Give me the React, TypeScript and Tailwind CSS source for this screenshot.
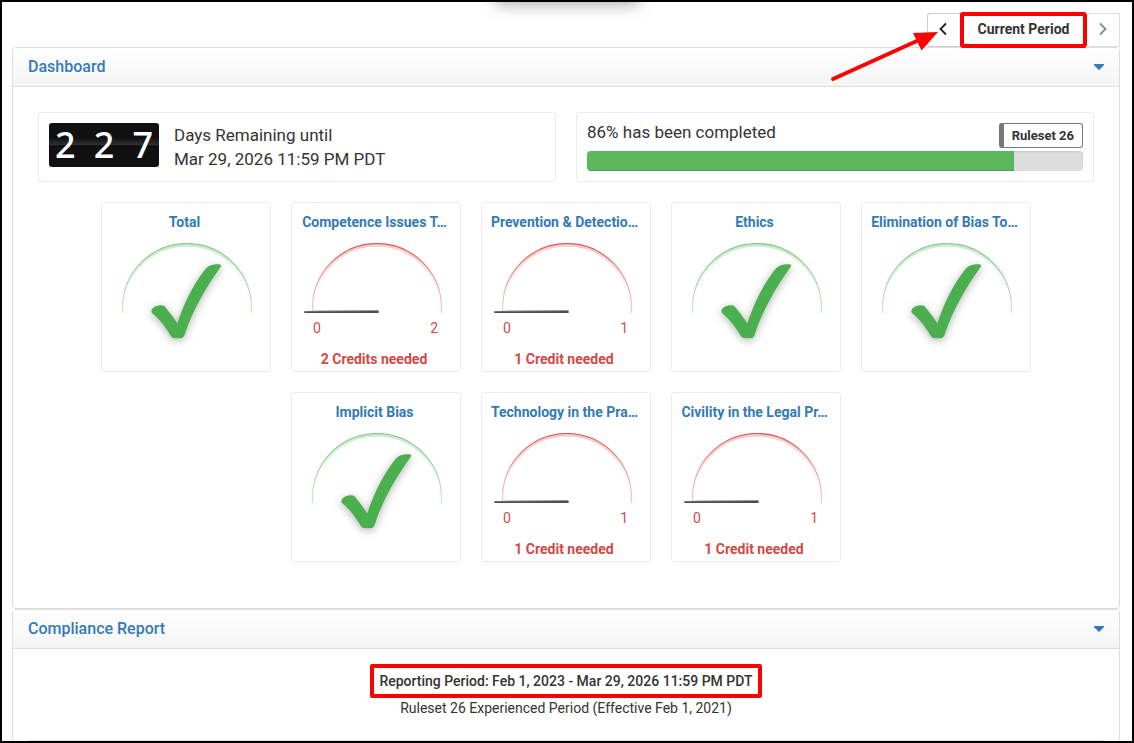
import React from "react";

type Tile = { title: string; needed?: number };

const tiles: Tile[] = [
  { title: "Total" },
  { title: "Competence Issues T…", needed: 2 },
  { title: "Prevention & Detectio…", needed: 1 },
  { title: "Ethics" },
  { title: "Elimination of Bias To…" },
  { title: "Implicit Bias" },
  { title: "Technology in the Pra…", needed: 1 },
  { title: "Civility in the Legal Pr…", needed: 1 },
];

function Gauge({ done }: { done: boolean }) {
  const id = done ? "arc-done" : "arc-open";
  const color = done ? "#4caf50" : "#d9453d";
  return (
    <svg viewBox="0 0 168 106" className="block h-[106px] w-full overflow-visible" aria-hidden="true">
      <defs>
        <linearGradient id={id} gradientUnits="userSpaceOnUse" x1="0" y1="10" x2="0" y2="80">
          <stop offset="0" stopColor={color} stopOpacity={done ? 0.65 : 0.95} />
          <stop offset="0.5" stopColor={color} stopOpacity="0.5" />
          <stop offset="1" stopColor={color} stopOpacity="0.28" />
        </linearGradient>
        <linearGradient id={id + "-glow"} gradientUnits="userSpaceOnUse" x1="0" y1="10" x2="0" y2="60">
          <stop offset="0" stopColor={color} stopOpacity="0.3" />
          <stop offset="1" stopColor={color} stopOpacity="0" />
        </linearGradient>
        <filter id="mark-shadow" x="-30%" y="-30%" width="160%" height="160%">
          <feDropShadow dx="0" dy="2" stdDeviation="4" floodColor="#000" floodOpacity="0.3" />
        </filter>
      </defs>
      <path d="M21.5 79V75A63.5 63 0 0 1 148.5 75V79" fill="none" stroke={`url(#${id}-glow)`} strokeWidth="3" />
      <path d="M20.5 80V75A64.5 64.5 0 0 1 149.5 75V80" fill="none" stroke={`url(#${id})`} strokeWidth="1.2" />
      {done ? (
        <path
          filter="url(#mark-shadow)"
          fill="#4caf50"
          d="M49.3 78.5C49.3 75 54 72.3 59.5 72.3C61.5 72.3 62.5 73 64 75C68 80 72 85.2 75.3 90.2C82 70 92 50 103.5 36C105.5 33.500 109 31.2 116 31.2C119 31.2 119.8 32 118.5 34.2C105 53 91 76 82.8 101.500C82 104.5 80.5 105.3 75.5 105.3C71.5 105.3 69.8 105 68.5 102.5C63.5 94.5 57.5 86 50.5 80.5C49.7 79.8 49.3 79.2 49.3 78.5Z"
        />
      ) : (
        <g>
          <path d="M12 78.3L28 77.6L86.5 77V80H12.5Z" fill="#909090" />
          <path d="M12.5 78.5L86.5 78V80L12.5 80Z" fill="#4f4d4d" />
        </g>
      )}
    </svg>
  );
}

function CreditTile({ title, needed }: Tile) {
  return (
    <article className="flex h-[170px] w-[170px] flex-col rounded-[3px] border border-[#ebebeb] pt-[9px]">
      <h3 className="pr-[3px] text-center text-sm/5 font-bold whitespace-nowrap text-[#337ab7]">{title}</h3>
      <div className="relative pt-px">
        <Gauge done={!needed} />
        {needed && (
          <div className="absolute inset-x-0 top-[86px] flex justify-between pr-[22px] pl-[21px] text-sm/5 text-[#d14a45]">
            <span>0</span>
            <span>{needed}</span>
          </div>
        )}
      </div>
      {needed && (
        <p className="mt-2.5 pr-1 text-center text-sm/5 font-bold text-[#d14a45]">
          {needed} {needed > 1 ? "Credits" : "Credit"} needed
        </p>
      )}
    </article>
  );
}

function PanelHeader({ title }: { title: string }) {
  return (
    <header className="flex h-[39px] items-center justify-between border-b border-[#ddd] bg-linear-to-b from-white to-[#f4f4f4] pr-3.5 pl-[15px]">
      <h2 className="text-base/5 font-medium text-[#337ab7]">{title}</h2>
      <button type="button" aria-label={`Toggle ${title}`} className="flex h-5 w-3 items-center justify-center">
        <svg viewBox="0 0 12 8" className="h-2 w-3" aria-hidden="true">
          <path d="M1.3 1H10.7Q11.5 1.5 10.8 2.300L6.7 6.6Q6 7.2 5.3 6.6L1.2 2.3Q.5 1.5 1.3 1Z" fill="#337ab7" />
        </svg>
      </button>
    </header>
  );
}

function Chevron({ d }: { d: string }) {
  return (
    <svg viewBox="0 0 10 14" className="h-3.5 w-2.5" fill="none" stroke="currentColor" strokeWidth="1.8" aria-hidden="true">
      <path d={d} />
    </svg>
  );
}

export default function App() {
  const progress = 86;
  return (
    <main className="relative flex min-h-screen flex-col overflow-hidden border-2 border-black bg-white pt-[11px] pr-3 pl-2.5 font-['Roboto',sans-serif] text-[#333]">
      <div className="absolute -top-5 left-1/2 h-5 w-36 -translate-x-1/2 shadow-[0_2px_16px_rgba(0,0,0,0.35)]" />

      <nav aria-label="Reporting period" className="relative flex h-[34px] self-end">
        <button type="button" aria-label="Previous period" className="flex w-[34px] items-center justify-center rounded-l-[3px] border border-r-0 border-[#ccc] pr-1 pb-0.5 text-[#222]">
          <Chevron d="M8 1.5L2.5 7L8 12.5" />
        </button>
        <button type="button" className="min-w-[125px] rounded-xs pb-0.5 text-sm/5 font-bold outline-4 -outline-offset-3 outline-[#f00]">
          Current Period
        </button>
        <button type="button" aria-label="Next period" className="flex w-[34px] items-center justify-center border border-l-0 border-[#ddd] pb-0.5 text-[#888]">
          <Chevron d="M2 1.5L7.5 7L2 12.5" />
        </button>
        <svg viewBox="0 0 112 56" className="pointer-events-none absolute top-4 right-[180px] h-14 w-28" aria-hidden="true">
          <path d="M5 50L90 11.5" stroke="#f00" strokeWidth="4" strokeLinecap="round" />
          <path d="M110 3L85 4L93.5 21.5Z" fill="#f00" />
        </svg>
      </nav>

      <section className="rounded-[4px] border border-[#ddd]">
        <PanelHeader title="Dashboard" />
        <div className="px-[25px] pt-[25px] pb-[46px]">
          <div className="grid grid-cols-2 gap-5">
            <div className="flex rounded-[3px] border border-[#ebebeb] p-2.5">
              <div className="flex h-11 w-[110px] items-center justify-between rounded-[3px] bg-[linear-gradient(#111_0,#111_35%,#333_50%,#111_50%,#111_100%)] px-1.5 font-['Noto_Sans',sans-serif] text-[36px]/[42px] font-medium text-white">
                <span>2</span>
                <span>2</span>
                <span>7</span>
              </div>
              <p className="ml-[15px] text-[17px]/6">
                Days Remaining until
                <br />
                Mar 29, 2026 11:59 PM PDT
              </p>
            </div>
            <div className="rounded-[3px] border border-[#ebebeb] p-2.5">
              <div className="flex h-7 items-start justify-between">
                <p className="text-[17px]/[18px]">{progress}% has been completed</p>
                <span className="rounded-[3px] border border-l-5 border-[#777] px-2 text-[13px]/[23px] font-bold">Ruleset 26</span>
              </div>
              <div
                role="progressbar"
                aria-valuenow={progress}
                aria-label="Completed"
                className="h-5 overflow-hidden rounded-[4px] bg-[#ddd] shadow-[inset_0_1px_2px_rgba(0,0,0,0.1)]"
              >
                <div className="h-full bg-[#5cb85c] shadow-[inset_0_-1px_0_rgba(0,0,0,0.15)]" style={{ width: `${progress}%` }} />
              </div>
            </div>
          </div>
          <div className="mt-5 flex flex-wrap justify-center gap-5">
            {tiles.map((tile) => (
              <CreditTile key={tile.title} {...tile} />
            ))}
          </div>
        </div>
      </section>

      <section className="flex flex-1 flex-col rounded-t-[4px] border border-b-0 border-[#ddd]">
        <PanelHeader title="Compliance Report" />
        <div className="flex flex-col items-center px-4 pt-[15px]">
          <p className="rounded-xs border-4 border-[#f00] px-[5px] py-[3px] text-sm/5 font-medium">
            Reporting Period: Feb 1, 2023 - Mar 29, 2026 11:59 PM PDT
          </p>
          <p className="text-sm/5">Ruleset 26 Experienced Period (Effective Feb 1, 2021)</p>
          <div className="mt-[22px] w-full border-t border-[#ddd]" />
        </div>
      </section>
    </main>
  );
}
